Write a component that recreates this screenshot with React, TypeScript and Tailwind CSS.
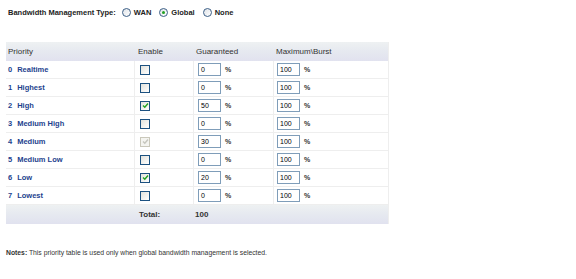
import React from 'react'

type Row = { n: number; label: string; enabled: boolean; disabled?: boolean; g: string; m: string }

const rows: Row[] = [
  { n: 0, label: 'Realtime', enabled: false, g: '0', m: '100' },
  { n: 1, label: 'Highest', enabled: false, g: '0', m: '100' },
  { n: 2, label: 'High', enabled: true, g: '50', m: '100' },
  { n: 3, label: 'Medium High', enabled: false, g: '0', m: '100' },
  { n: 4, label: 'Medium', enabled: true, disabled: true, g: '30', m: '100' },
  { n: 5, label: 'Medium Low', enabled: false, g: '0', m: '100' },
  { n: 6, label: 'Low', enabled: true, g: '20', m: '100' },
  { n: 7, label: 'Lowest', enabled: false, g: '0', m: '100' },
]

const cols = 'grid grid-cols-[128px_59px_80px_116px]'

function Radio({ on, label }: { on?: boolean; label: string }) {
  return (
    <span className="flex items-center gap-[3px]">
      <span className="flex h-[9px] w-[9px] items-center justify-center rounded-full border border-[#3c5f86] bg-gradient-to-br from-[#dfe3e8] to-white">
        {on && <span className="h-[3px] w-[3px] rounded-full bg-[#21a121]" />}
      </span>
      <span>{label}</span>
    </span>
  )
}

function Check({ on, disabled }: { on: boolean; disabled?: boolean }) {
  return (
    <span
      className={
        'flex h-[10px] w-[10px] items-center justify-center border ' +
        (disabled
          ? 'border-[#cac8bb] bg-[#f4f4f0]'
          : 'border-[#1c5180] bg-gradient-to-br from-[#e2e2dc] to-white')
      }
    >
      {on && (
        <svg width="7" height="7" viewBox="0 0 7 7">
          <path d="M1 3.5 L2.8 5.3 L6 1.5" fill="none" stroke={disabled ? '#c5c5bd' : '#21a121'} strokeWidth="1.4" />
        </svg>
      )}
    </span>
  )
}

function Field({ v }: { v: string }) {
  return (
    <span className="flex items-center gap-[4px]">
      <span className="flex h-[13px] w-[23px] items-center border border-[#7f9db9] bg-white pl-[2px] text-[7px] text-black">
        {v}
      </span>
      <span className="text-[7px] font-bold tracking-[-0.5px] text-[#333]">%</span>
    </span>
  )
}

export default function App() {
  return (
    <div className="h-[279px] w-[576px] bg-white font-['Liberation_Sans',sans-serif] text-[8px] text-[#333]">
      <div className="flex items-center gap-[8px] pl-[8px] pt-[7px] text-[7.5px] font-bold text-[#222]">
        <span className="-mr-[2px]">Bandwidth Management Type:</span>
        <Radio label="WAN" />
        <Radio on label="Global" />
        <Radio label="None" />
      </div>

      <div className="ml-[6px] mt-[24px] w-[383px] border-r border-[#eee]">
        <div className={cols + ' h-[19px] items-center bg-gradient-to-b from-[#eef1f2] via-[#e6e9f0] to-[#e1e2ef] text-[#333]'}>
          <span className="pl-[2px]">Priority</span>
          <span className="pl-[4px]">Enable</span>
          <span className="pl-[3px]">Guaranteed</span>
          <span className="pl-[3px]">Maximum\Burst</span>
        </div>
        {rows.map(r => (
          <div key={r.n} className={cols + ' h-[18px] border-b border-[#eee]'}>
            <span className="flex items-center gap-[5px] pl-[2px] text-[7.5px] font-bold text-[#1d3f8e]">
              <span>{r.n}</span>
              <span>{r.label}</span>
            </span>
            <span className="flex items-center border-l border-[#eee] pl-[5px]">
              <Check on={r.enabled} disabled={r.disabled} />
            </span>
            <span className="flex items-center border-l border-[#eee] pl-[4px]">
              <Field v={r.g} />
            </span>
            <span className="flex items-center border-l border-[#eee] pl-[3px]">
              <Field v={r.m} />
            </span>
          </div>
        ))}
        <div className={cols + ' h-[19px] items-center bg-gradient-to-b from-[#eef1f2] via-[#e6e9f0] to-[#e1e2ef] font-bold text-[#333]'}>
          <span />
          <span className="pl-[5px]">Total:</span>
          <span className="pl-[2px]">100</span>
          <span />
        </div>
      </div>

      <div className="mt-[24px] pl-[6px] text-[6.8px] text-[#333]">
        <span className="font-bold">Notes:</span> This priority table is used only when global bandwidth management is selected.
      </div>
    </div>
  )
}
